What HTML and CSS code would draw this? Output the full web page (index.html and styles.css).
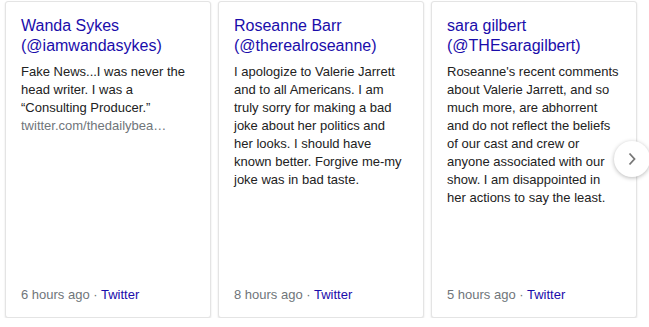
FILE: index.html
```html
<!DOCTYPE html>
<html>
<head>
<meta charset="utf-8">
<link rel="stylesheet" href="styles.css">
</head>
<body>
<div class="carousel">
  <div class="card">
    <a class="title" href="#">Wanda Sykes (@iamwandasykes)</a>
    <div class="text">Fake News...I was never the head writer. I was a “Consulting Producer.” <span class="url">twitter.com/thedailybea…</span></div>
    <div class="meta"><span class="time">6 hours ago</span> · <a class="src" href="#">Twitter</a></div>
  </div>
  <div class="card">
    <a class="title" href="#">Roseanne Barr (@therealroseanne)</a>
    <div class="text">I apologize to Valerie Jarrett and to all Americans. I am truly sorry for making a bad joke about her politics and her looks. I should have known better. Forgive me-my joke was in bad taste.</div>
    <div class="meta"><span class="time">8 hours ago</span> · <a class="src" href="#">Twitter</a></div>
  </div>
  <div class="card">
    <a class="title" href="#">sara gilbert (@THEsaragilbert)</a>
    <div class="text">Roseanne's recent comments about Valerie Jarrett, and so much more, are abhorrent and do not reflect the beliefs of our cast and crew or anyone associated with our show. I am disappointed in her actions to say the least.</div>
    <div class="meta"><span class="time">5 hours ago</span> · <a class="src" href="#">Twitter</a></div>
  </div>
  <div class="next">
    <svg width="12" height="14" viewBox="0 0 12 14"><path d="M3.5 1.5 L8.5 7 L3.5 12.5" fill="none" stroke="#777" stroke-width="1.8"/></svg>
  </div>
</div>
</body>
</html>
```

FILE: styles.css
```css
html, body {
  margin: 0;
  padding: 0;
  background: #fff;
}
body {
  font-family: "Liberation Sans", Arial, sans-serif;
  overflow: hidden;
}
.carousel {
  position: relative;
  display: flex;
  gap: 7px;
  padding: 1px 0 0 5px;
}
.card {
  box-sizing: border-box;
  width: 206px;
  height: 317px;
  border: 1px solid #e4e4e4;
  border-radius: 3px;
  box-shadow: 0 1px 2px rgba(0, 0, 0, 0.13);
  padding: 14px 17px 13px 15px;
  display: flex;
  flex-direction: column;
  background: #fff;
}
.title {
  display: block;
  font-size: 16px;
  line-height: 20px;
  color: #1a0dab;
  text-decoration: none;
  margin-bottom: 7px;
}
.text {
  font-size: 13px;
  line-height: 18px;
  color: #222;
}
.url {
  display: block;
  color: #70757a;
}
.meta {
  margin-top: auto;
  font-size: 13px;
  line-height: 18px;
  color: #70757a;
}
.src {
  color: #1a0dab;
  text-decoration: none;
}
.next {
  position: absolute;
  left: 614px;
  top: 141px;
  width: 36px;
  height: 36px;
  border-radius: 50%;
  background: #fff;
  box-shadow: 0 1px 4px rgba(0, 0, 0, 0.28);
  display: flex;
  align-items: center;
  justify-content: center;
}
.next svg {
  display: block;
}
```
